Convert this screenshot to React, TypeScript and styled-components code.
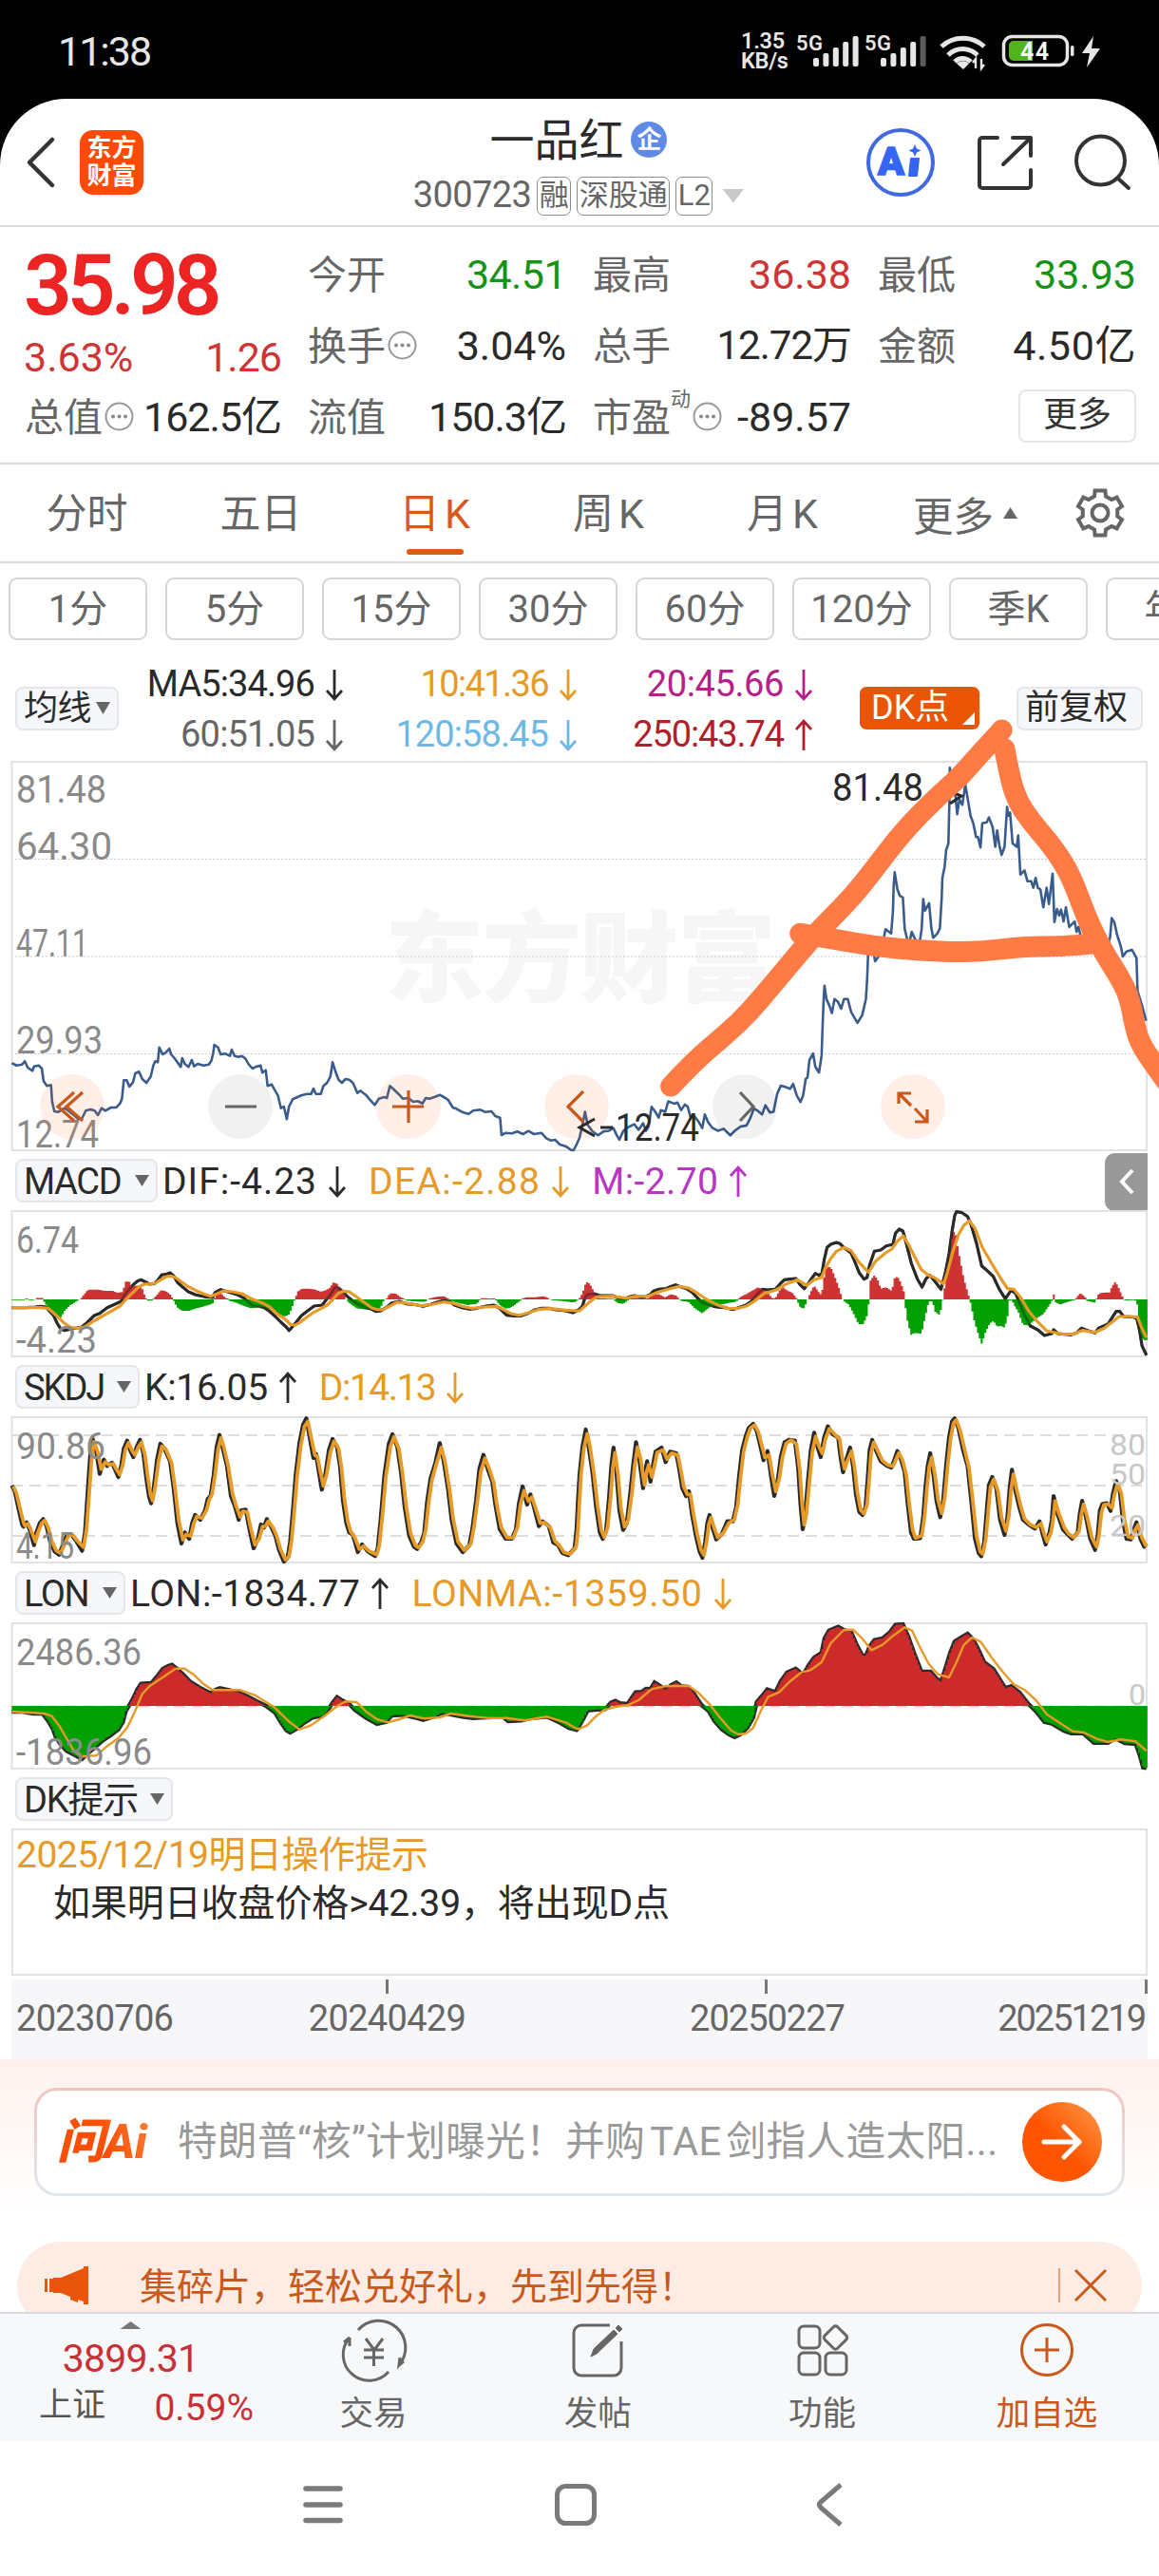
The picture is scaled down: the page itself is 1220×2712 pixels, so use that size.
import React from 'react'
import styled, { createGlobalStyle } from 'styled-components'

const GlobalStyle = createGlobalStyle`
  * {
    box-sizing: border-box;
  }

  body {
    margin: 0;
    background: #000;
    font-family: Roboto, 'Noto Sans CJK SC', sans-serif;
    color: #2b2b2b;
  }

  svg {
    display: block;
    flex: none;
    overflow: visible;
  }
`

const ORANGE = '#d9581a'
const GOLD = '#e79a27'
const RED = '#cd2b2b'
const GREEN = '#00a000'
const INK = '#2a2a2a'

const Screen = styled.div`
  width: 1220px;
  height: 2712px;
  overflow: hidden;
  background: #000;
`

const App = styled.main`
  display: flex;
  flex-direction: column;
  height: 2608px;
  background: #fff;
  border-radius: 70px 70px 0 0;
  overflow: hidden;
`

interface TxtProps {
  $size: number
  $color?: string
  $weight?: number
  $ls?: number
}

const Txt = styled.span<TxtProps>`
  font-size: ${p => p.$size}px;
  line-height: 1.1;
  color: ${p => p.$color || INK};
  font-weight: ${p => p.$weight || 400};
  letter-spacing: ${p => p.$ls || 0}px;
  white-space: nowrap;
`

/* status bar */

const StatusBar = styled.div`
  height: 104px;
  padding: 4px 62px 0 61px;
  display: flex;
  align-items: center;
  color: #e6e6e6;
`

const Clock = styled.div`
  flex: 1;
  font-size: 43px;
  letter-spacing: -2px;
`

const NetSpeed = styled.div`
  width: 57px;
  display: flex;
  flex-direction: column;
  font-size: 23.5px;
  font-weight: 600;
  line-height: 21px;
  letter-spacing: -0.3px;
`

const StatusIcons = styled.svg`
  font-size: 22px;
  font-weight: 600;
`

const Signal = ({ x, dim }: { x: number, dim?: boolean }) => (
  <g fill="#e6e6e6">
    {[9, 14, 20, 26, 32].map((h, i) => (
      <rect key={i} x={x + i * 10.4} y={72 - h} width="6" height={h} rx="2" opacity={dim && i === 4 ? 0.4 : 1} />
    ))}
  </g>
)

/* header */

const Header = styled.header`
  height: 135px;
  padding: 0 30px 0 28px;
  border-bottom: 2px solid #dadada;
  display: grid;
  grid-template-columns: 1fr auto 1fr;
`

const HeaderLeft = styled.div`
  display: flex;
  align-items: center;
  gap: 26px;
`

const HeaderRight = styled.div`
  display: flex;
  align-items: center;
  justify-content: flex-end;
  gap: 44.5px;
`

const Brand = styled.div`
  width: 67px;
  height: 68px;
  padding-top: 5px;
  border-radius: 14px;
  background: #ff4a05;
  color: #fff;
  font-size: 26px;
  font-weight: 700;
  line-height: 29px;
  text-align: center;
`

const Title = styled.div`
  display: flex;
  flex-direction: column;
  align-items: center;
`

const TitleRow = styled.div`
  height: 52px;
  margin-top: 18px;
  display: flex;
  align-items: center;
  gap: 8px;
`

const Badge = styled.span`
  width: 38px;
  height: 38px;
  margin-top: -2px;
  border-radius: 50%;
  background: #5f8be6;
  color: #fff;
  font-size: 26px;
  font-weight: 700;
  line-height: 38px;
  text-align: center;
`

const CodeRow = styled.div`
  height: 64px;
  display: flex;
  align-items: center;
  gap: 6px;
`

const Tag = styled.span`
  height: 41px;
  padding: 0 1.5px;
  border: 1.5px solid #8c8c8c;
  border-radius: 7px;
  color: #666;
  font-size: 31px;
  line-height: 38px;
`

const Triangle = styled.i<{ $w: number, $h: number, $color?: string, $up?: boolean }>`
  flex: none;
  width: ${p => p.$w}px;
  height: ${p => p.$h}px;
  background: ${p => p.$color || '#666'};
  clip-path: ${p => p.$up ? 'polygon(50% 0, 100% 100%, 0 100%)' : 'polygon(0 0, 100% 0, 50% 100%)'};
`

const MenuTriangle = styled(Triangle)`
  margin-left: 4px;
`

/* quote */

const Quote = styled.section`
  height: 250px;
  padding: 13px 0 0 26px;
  border-bottom: 2px solid #dadada;
  display: grid;
  grid-template-columns: 270px 272px 272px 272px;
  grid-template-rows: repeat(3, 75px);
  column-gap: 28px;
`

const PriceCell = styled.div`
  grid-row: span 2;
`

const Price = styled.div`
  height: 96px;
  margin-left: -1px;
  color: #ed2424;
  font-size: 89px;
  font-weight: 600;
  letter-spacing: -5px;
  line-height: 98px;
`

const Change = styled.div`
  height: 57px;
  margin-left: -1px;
  display: flex;
  align-items: center;
  justify-content: space-between;
`

const Cell = styled.div`
  display: flex;
  align-items: center;

  > :last-child {
    margin-left: auto;
  }
`

const Label = styled.span`
  font-size: 41px;
  line-height: 48px;
  color: #666;
  white-space: nowrap;
`

const Sup = styled.sup`
  align-self: flex-start;
  margin-top: 5px;
  font-size: 21px;
  line-height: 26px;
  color: #666;
`

const MoreButton = styled.button`
  width: 124px;
  height: 56px;
  margin-top: -3px;
  border: 2px solid #e6e6e6;
  border-radius: 8px;
  background: #fff;
  color: #333;
  font: 36px/48px Roboto, 'Noto Sans CJK SC', sans-serif;
  padding: 0 0 3px;
`

const DotsIcon = styled.svg`
  margin-left: 2px;
`

const Dots = () => (
  <DotsIcon width="31" height="31" viewBox="0 0 31 31" fill="none">
    <circle cx="15.5" cy="14.5" r="14" stroke="#999" strokeWidth="2" />
    <g fill="#888">
      <circle cx="9" cy="14.5" r="2" />
      <circle cx="15.5" cy="14.5" r="2" />
      <circle cx="22" cy="14.5" r="2" />
    </g>
  </DotsIcon>
)

/* tabs */

const Tabs = styled.nav`
  height: 104px;
  padding: 0 36px 0 0;
  border-bottom: 2px solid #dadada;
  display: flex;
`

const Tab = styled.div<{ $active?: boolean, $ls?: number }>`
  width: 183px;
  padding-top: 2px;
  display: flex;
  flex-direction: column;
  align-items: center;
  justify-content: center;
  font-size: 43px;
  line-height: 60px;
  letter-spacing: ${p => p.$ls || 0}px;
  text-indent: ${p => p.$ls || 0}px;
  color: ${p => p.$active ? ORANGE : '#666'};
  position: relative;

  &::after {
    content: '';
    display: ${p => p.$active ? 'block' : 'none'};
    position: absolute;
    bottom: 7px;
    width: 60px;
    height: 6px;
    border-radius: 3px;
    background: #e2590f;
  }
`

const MoreTab = styled.div`
  flex: 1;
  padding-left: 46px;
  display: flex;
  align-items: center;
  gap: 10px;
  font-size: 42.5px;
  color: #666;
`

const Periods = styled.div`
  height: 97px;
  padding: 15px 0 0 9px;
  display: flex;
  gap: 19px;
  overflow: hidden;
`

const Period = styled.div`
  flex: none;
  width: 146px;
  height: 66px;
  border: 2px solid #d6d6d6;
  border-radius: 9px;
  text-align: center;
  color: #666;
  font-size: 40px;
  line-height: 63px;
`

/* moving averages */

const Averages = styled.div`
  height: 111px;
  padding-left: 16px;
  display: flex;
  align-items: center;
`

const Chip = styled.div<{ $w: number }>`
  flex: none;
  width: ${p => p.$w}px;
  height: 46px;
  padding: 0 7px;
  border: 2px solid #e4e6ea;
  border-radius: 8px;
  background: #f6f7fa;
  color: #2b2b2b;
  font-size: 36px;
  line-height: 42px;
  letter-spacing: -0.6px;
  white-space: nowrap;
  display: flex;
  align-items: center;
  justify-content: space-between;
`

const AverageGrid = styled.div`
  width: 730px;
  height: 107px;
  padding-top: 2px;
  display: grid;
  grid-template-columns: 236px 246px 248px;
  grid-template-rows: 53px 53px;
`

const Reading = styled.div<{ $color: string, $gap?: number }>`
  display: flex;
  align-items: center;
  justify-content: flex-end;
  gap: ${p => p.$gap || 12}px;
  color: ${p => p.$color};
`

const DkButton = styled.div`
  width: 126px;
  height: 45px;
  margin: 0 39px 0 50px;
  padding: 0 5px 5px 12px;
  border-radius: 7px;
  background: #e95504;
  color: #fff;
  font-size: 36px;
  line-height: 36px;
  white-space: nowrap;
  display: flex;
  align-items: flex-end;
  justify-content: space-between;
`

const Corner = styled.i`
  width: 13px;
  height: 13px;
  background: #fff;
  clip-path: polygon(100% 0, 100% 100%, 0 100%);
`

const Arrow = ({ up }: { up?: boolean }) => (
  <svg width="18" height="34" viewBox="0 0 18 34" fill="none" stroke="currentColor" strokeWidth="2.8">
    <path d={up ? 'M9 33V3M1 11l8-9 8 9' : 'M9 1v30M1 23l8 9 8-9'} />
  </svg>
)

/* charts: data is kept per half (left, right) in raster units, y from the top of the block */

type Pt = [number, number]

const KX = 2.5705

const read = (src: string): Pt[] =>
  src.trim().split(/\s+/).map(s => s.split(',').map(Number) as Pt)

const place = (src: string, x0: number, y0: number, ky: number): Pt[] =>
  read(src).map(([x, y]) => [x0 + x / KX, y0 + y / ky])

const series = (left: string, right: string, y0: number): Pt[] => [
  ...place(left, 0, y0, 3),
  ...place(right, 610, y0, 3)
]

const line = (pts: Pt[]) => 'M' + pts.map(([x, y]) => `${x.toFixed(1)} ${y.toFixed(1)}`).join('L')

const smooth = (pts: Pt[]) => {
  let d = `M${pts[0][0]} ${pts[0][1]}`
  for (let i = 1; i < pts.length - 1; i++) {
    const [x, y] = pts[i]
    const [nx, ny] = pts[i + 1]
    d += `Q${x} ${y} ${(x + nx) / 2} ${(y + ny) / 2}`
  }
  const end = pts[pts.length - 1]
  return d + `L${end[0]} ${end[1]}`
}

const valueAt = (pts: Pt[], x: number) => {
  let i = 1
  while (i < pts.length - 1 && pts[i][0] < x) i++
  const [x1, y1] = pts[i - 1]
  const [x2, y2] = pts[i]
  return x2 === x1 ? y2 : y1 + (y2 - y1) * Math.min(1, Math.max(0, (x - x1) / (x2 - x1)))
}

const bars = (pts: Pt[], zero: number, above: boolean, step: number) => {
  let d = ''
  for (let x = pts[0][0]; x < 1207; x += step) {
    const y = valueAt(pts, x + step / 2)
    if (above ? y < zero - 0.3 : y > zero + 0.3) {
      d += `M${x.toFixed(1)} ${zero}V${y.toFixed(1)}h${step + 0.1}V${zero}z`
    }
  }
  return d
}

const priceLine: Pt[] = [
  ...place(`32,958 45,965 60,962 67,952 75,972 88,982 92,968 105,965 113,975 118,1015 127,1030 138,1027 141,1080 147,1110
    158,1112 175,1100 187,1110 200,1122 212,1135 222,1132 232,1108 245,1104 256,1108 265,1122 275,1100 285,1108 300,1098
    315,1098 325,1085 330,1070 335,1012 343,1012 350,1032 360,1018 366,990 376,985 385,1008 396,1020 408,1000 415,965
    420,952 427,955 431,908 440,930 448,925 458,912 463,930 472,942 480,955 489,970 493,942 500,960 510,970 519,948
    525,968 535,960 550,965 565,962 572,950 577,925 580,900 590,908 597,930 610,928 622,935 627,915 635,935 645,938
    655,935 665,945 672,960 683,975 695,968 705,965 710,988 719,980 724,1030 735,1025 742,1040 752,1060 760,1100
    768,1095 776,1135 782,1095 792,1072 805,1065 815,1060 830,1055 842,1055 848,1038 855,1055 868,1055 875,1030
    885,1020 894,1000 900,955 908,985 916,1010 925,1020 935,1008 945,1010 955,1020 967,1052 975,1045 990,1058
    1000,1072 1014,1090 1025,1070 1040,1065 1047,1068 1055,1030 1065,1040 1078,1055 1090,1070 1105,1068 1118,1080
    1130,1078 1143,1085 1152,1068 1162,1070 1175,1065 1190,1058 1205,1068 1213,1075 1225,1098 1235,1102 1250,1112
    1268,1118 1280,1108 1300,1105 1312,1112 1330,1110 1340,1125 1353,1130 1357,1185 1368,1178 1385,1180 1400,1174
    1415,1182 1430,1172 1445,1182 1465,1178 1478,1195 1490,1202 1502,1200 1515,1215 1530,1220 1545,1232 1552,1233
    1560,1215`, 0, 800, 3),
  ...place(`0,1330 8,1290 15,1250 22,1290 35,1310 50,1322 65,1310 80,1308 92,1300 100,1320 108,1335 118,1310 130,1298
    148,1288 160,1305 172,1285 180,1308 187,1295 195,1235 205,1250 214,1268 220,1245 232,1250 240,1218 256,1225
    265,1222 275,1245 285,1228 293,1235 300,1265 312,1265 322,1280 332,1300 339,1258 348,1282 360,1300 375,1308
    390,1302 408,1322 420,1308 436,1295 452,1292 462,1270 472,1240 480,1245 494,1258 503,1230 515,1252 525,1250
    535,1195 545,1170 560,1175 570,1180 578,1165 588,1200 598,1220 605,1200 612,1150 617,1145 622,1092 632,1072
    638,1112 648,1130 655,1080 658,980 661,900 663,865 668,905 676,925 683,948 690,905 700,915 708,935 716,905
    726,905 735,945 752,978 765,955 775,905 778,850 781,770 784,718 792,740 800,790 812,770 820,740 828,692 843,705
    848,640 850,560 853,518 860,570 867,590 875,595 880,690 886,720 892,735 899,700 908,722 920,735 926,690 930,600
    935,635 946,612 952,690 957,718 968,705 975,690 980,600 982,535 988,500 992,450 998,430 1001,300 1002,198
    1008,240 1016,270 1022,340 1028,295 1036,312 1044,250 1050,290 1058,345 1066,370 1073,410 1078,410 1085,442
    1090,368 1102,365 1108,350 1118,380 1125,440 1130,390 1136,435 1142,465 1150,440 1157,318 1160,345 1165,335
    1172,430 1183,440 1187,405 1193,525 1204,512 1212,545 1222,545 1228,565 1234,535 1240,565 1247,570 1255,625
    1264,565 1270,615 1280,522 1285,670 1292,630 1298,650 1303,632 1310,668 1316,625 1325,685 1340,668 1345,700
    1350,685 1358,720 1370,735 1400,725 1415,730 1430,740 1436,715 1440,658 1447,670 1455,710 1465,745 1470,775
    1480,760 1495,755 1507,780 1510,880 1522,925 1533,972`, 610, 740, 2.9037)
]

const dif = series(
  `32,350 70,350 95,348 110,346 125,348 135,362 145,375 155,400 165,418 175,422 195,416 205,415 220,412 235,398 255,375
  270,368 290,350 310,340 328,330 335,315 345,298 360,278 372,266 382,262 395,270 405,276 418,274 428,262 438,246
  448,245 460,240 470,250 480,270 495,286 510,300 530,310 555,316 575,318 582,302 597,293 610,298 640,308 660,320
  685,345 700,345 715,350 730,362 745,378 760,396 775,412 782,422 790,412 800,398 815,376 830,362 850,345 872,342
  882,326 892,312 902,295 908,285 918,290 928,300 940,315 950,325 970,340 990,350 1005,355 1018,362 1030,360
  1045,350 1060,335 1080,330 1100,338 1120,340 1145,346 1165,340 1185,332 1200,328 1215,330 1230,342 1250,350
  1270,355 1290,352 1315,345 1335,342 1350,350 1360,362 1372,374 1390,376 1410,376 1425,370 1445,358 1465,352
  1485,352 1500,356 1530,360 1550,366`,
  `0,355 8,345 15,318 22,308 40,306 55,312 90,312 105,320 120,324 135,316 150,312 170,318 190,310 200,298 215,292
  235,290 245,284 260,278 275,285 290,290 305,302 318,318 330,332 345,340 370,348 395,350 415,356 430,350 450,342
  465,330 480,308 495,292 510,294 530,292 545,272 555,262 570,260 585,258 597,278 608,290 620,272 630,255 638,242
  648,248 656,242 662,200 670,160 680,150 695,144 705,148 715,160 735,178 745,205 757,240 770,260 778,255 785,215
  798,172 815,168 830,155 848,150 855,115 865,102 875,108 885,150 898,210 915,262 927,285 938,258 948,248 960,265
  978,292 990,240 1000,180 1008,110 1015,60 1020,47 1035,50 1050,62 1060,90 1075,150 1088,218 1102,232 1120,252
  1135,290 1152,322 1168,295 1180,305 1192,340 1205,375 1220,408 1240,420 1258,438 1278,432 1283,420 1295,432
  1330,436 1345,430 1358,415 1375,422 1395,430 1405,415 1430,402 1442,380 1452,362 1462,362 1472,378 1500,380
  1508,385 1515,420 1522,470 1534,500`,
  1260
)

const dea = series(
  `32,350 110,350 130,352 150,372 175,400 190,412 210,415 230,410 250,395 275,378 300,362 325,345 340,325 360,302
  375,285 390,276 405,275 420,273 435,262 450,252 462,250 475,255 490,268 510,284 530,296 550,306 570,314 590,305
  605,297 630,300 655,306 680,322 710,335 730,348 750,370 770,385 785,402 797,406 810,398 830,380 850,364 870,352
  885,342 900,325 915,305 930,298 945,300 960,312 975,325 990,337 1005,350 1020,356 1035,357 1055,345 1075,333
  1100,336 1140,344 1170,340 1200,332 1225,336 1250,346 1275,352 1310,348 1345,346 1365,358 1385,370 1405,374
  1430,366 1460,355 1490,353 1530,358 1560,360`,
  `0,360 15,345 35,325 50,315 90,314 125,320 150,314 185,314 215,300 245,290 270,283 295,288 320,305 345,325 375,342
  400,352 425,353 450,346 475,328 500,305 530,295 560,275 590,262 615,280 635,262 655,255 665,225 680,195 695,172
  715,160 735,170 755,205 782,238 800,205 825,180 845,165 860,140 876,124 890,150 905,185 925,230 945,248 960,255
  985,275 995,240 1010,175 1025,120 1040,90 1055,76 1070,100 1090,160 1115,210 1140,258 1158,290 1175,292 1195,320
  1215,360 1240,395 1265,424 1285,428 1310,434 1335,434 1360,422 1395,428 1420,415 1445,392 1460,378 1490,378
  1510,380 1520,410 1534,445`,
  1260
)

const macd = series(
  `32,326 68,326 69,322 75,322 76,326 92,326 100,319 116,320 118,328 130,350 145,375 163,384 175,360 190,342 210,328
  218,322 228,308 238,293 262,293 285,297 305,297 318,304 332,300 340,268 350,268 356,285 372,280 386,292 393,318
  400,328 412,328 415,322 425,310 435,295 445,297 458,305 468,322 470,328 480,350 492,360 512,360 525,354 545,348
  560,343 575,338 580,326 582,310 595,300 608,318 618,322 620,328 640,335 660,345 680,352 695,350 715,348 735,358
  755,372 770,378 782,372 790,350 797,326 800,318 805,300 818,290 835,290 850,292 868,300 880,296 892,288 902,270
  912,275 920,290 930,305 936,322 938,328 950,340 965,352 985,355 1005,356 1020,360 1030,350 1038,328 1047,320
  1055,305 1070,305 1085,318 1096,322 1098,328 1120,330 1150,332 1154,328 1160,322 1180,316 1200,314 1215,322
  1218,328 1240,335 1265,342 1290,338 1297,328 1300,320 1340,321 1342,326 1355,345 1370,354 1385,348 1400,335
  1410,326 1412,322 1425,317 1450,317 1470,314 1485,320 1490,326 1520,329 1550,333 1560,330`,
  `0,320 8,305 18,268 28,275 38,298 45,316 55,321 90,322 95,328 105,336 118,338 130,328 135,322 150,319 185,321
  195,310 215,308 232,318 245,308 262,312 270,322 272,328 295,332 312,352 332,368 350,350 375,342 400,336 420,332
  430,326 432,318 450,308 470,295 482,286 495,292 510,305 522,320 530,320 540,298 550,285 560,295 575,302 587,320
  590,330 598,350 608,352 615,330 620,315 628,295 635,280 645,298 655,312 660,265 668,222 680,222 690,250 700,280
  710,318 714,328 728,340 740,365 755,402 768,402 780,370 783,330 784,320 787,265 798,248 808,265 815,290 830,286
  845,298 852,258 860,252 868,268 878,300 881,340 888,395 897,436 905,430 925,432 935,380 945,330 955,330 962,362
  973,372 980,350 984,315 992,260 1000,210 1008,130 1015,102 1022,150 1030,200 1040,260 1050,300 1055,320 1058,335
  1068,390 1078,430 1088,464 1098,430 1110,400 1120,392 1130,410 1140,408 1150,414 1158,380 1162,328 1170,326
  1178,345 1188,365 1200,404 1215,406 1235,385 1255,370 1270,345 1279,328 1280,308 1286,308 1287,332 1300,340
  1320,332 1340,326 1345,318 1355,304 1368,316 1372,328 1395,334 1398,328 1400,312 1410,303 1435,302 1440,285
  1450,268 1460,290 1470,318 1475,327 1500,326 1508,330 1512,370 1520,440 1527,454 1534,452`,
  1260
)

const kLine = series(
  `32,912 40,930 50,985 60,1035 64,1042 72,1028 80,1050 92,1100 98,1062 108,1030 117,1018 126,1040 136,1090 148,1120
  160,1130 170,1100 182,1065 192,1065 205,1085 222,1118 230,1060 238,920 244,820 250,762 260,800 270,875 281,830
  290,850 303,840 310,858 320,885 328,850 335,795 344,770 352,800 361,822 370,790 379,768 388,810 396,890 403,945
  409,968 416,920 425,830 434,780 445,795 460,835 470,920 480,1030 491,1095 500,1060 512,1080 520,1030 528,1005
  542,1020 555,990 562,955 570,945 578,880 586,790 594,752 602,790 614,850 625,945 635,975 646,1020 653,990 665,988
  675,1050 686,1110 698,1080 706,1035 714,1045 722,1018 735,1045 745,1070 755,1115 768,1152 778,1140 785,1090
  792,1000 800,880 810,780 820,720 829,700 838,760 848,825 855,812 863,870 871,925 880,880 890,800 900,765 912,790
  920,850 928,960 937,1030 945,1060 955,1068 968,1122 980,1098 995,1120 1015,1135 1022,1110 1030,1020 1040,880
  1052,780 1062,750 1075,790 1085,870 1095,980 1107,1070 1120,1105 1129,1112 1140,1090 1148,1060 1156,960 1165,890
  1178,840 1190,778 1200,830 1212,920 1222,1020 1235,1095 1252,1122 1270,1100 1278,1050 1288,960 1297,860 1308,815
  1320,860 1332,900 1340,970 1352,1050 1368,1080 1385,1080 1396,1050 1404,970 1414,915 1426,972 1435,940 1445,980
  1458,1040 1468,1025 1485,1040 1497,1092 1510,1100 1522,1125 1538,1132 1555,1110 1560,1050 1564,960`,
  `0,880 8,790 17,735 25,790 35,870 45,980 55,1060 63,1080 72,1055 80,950 86,850 92,792 100,870 108,990 118,1052
  128,1030 138,930 145,850 153,775 162,830 168,885 172,920 177,870 183,835 192,900 200,840 206,805 222,792 233,838
  245,805 262,810 270,860 278,920 288,945 296,930 304,1000 315,1070 325,1120 333,1140 340,1090 346,1030 352,1005
  360,1045 370,1082 385,1065 400,1025 415,1025 424,980 432,880 440,800 450,755 458,730 470,717 480,740 490,790
  498,832 509,803 518,880 527,945 537,890 545,820 555,775 568,767 583,770 592,860 598,970 604,1050 610,1010 618,900
  626,800 635,745 644,790 653,822 662,760 672,725 685,750 700,760 706,820 713,870 722,830 732,792 740,850 748,940
  757,995 766,1005 774,980 780,890 785,800 792,768 802,800 815,835 830,848 844,855 852,830 860,803 870,830 880,870
  888,970 897,1060 905,1080 922,1078 930,1010 936,920 942,850 949,810 958,880 966,960 976,1012 984,960 992,850
  1000,760 1008,710 1015,700 1025,730 1038,800 1050,850 1060,960 1070,1080 1080,1125 1087,1135 1095,1090 1102,990
  1108,910 1117,885 1128,920 1138,1020 1150,1068 1158,1010 1164,920 1170,862 1178,920 1190,980 1200,1020 1215,1035
  1232,1048 1245,1025 1252,1060 1261,1098 1272,1060 1278,1020 1283,945 1293,1000 1308,1050 1320,1065 1333,1080
  1348,1060 1354,1000 1360,960 1370,1010 1382,1080 1395,1115 1402,1070 1408,990 1415,970 1427,968 1437,992 1443,940
  1452,898 1462,930 1470,1020 1480,1080 1492,1082 1500,1050 1507,1028 1518,1080 1528,1105 1534,1095`,
  1260
)

const dLine: Pt[] = kLine.map(([x, y], i) => {
  const prev = kLine[Math.max(0, i - 1)][1]
  const next = kLine[Math.min(kLine.length - 1, i + 1)][1]
  return [Math.min(1207, x + 1.6), y * 0.76 + prev * 0.12 + next * 0.12]
})

const lon = series(
  `32,456 60,456 90,462 115,462 130,485 143,510 152,540 165,560 180,580 200,592 222,605 235,590 250,575 275,550 300,530
  320,512 332,490 340,455 350,435 362,410 372,385 382,368 410,366 425,345 440,322 455,312 465,308 478,320 495,338
  515,362 540,380 570,398 582,388 595,382 620,388 645,395 670,408 695,424 720,438 745,460 760,490 775,515 785,522
  800,512 825,490 845,475 875,468 888,450 900,428 912,410 925,420 945,432 960,450 990,475 1020,495 1045,488 1060,468
  1090,466 1120,474 1145,482 1175,472 1195,460 1215,464 1250,472 1280,476 1320,474 1360,472 1375,486 1410,484
  1440,476 1480,472 1510,488 1540,508 1560,514`,
  `0,500 12,475 22,452 40,450 70,448 85,428 97,422 110,430 130,432 140,415 152,395 168,394 180,384 192,385 203,364
  215,372 233,388 248,372 262,364 275,376 295,378 310,400 330,435 350,455 365,485 385,512 405,528 420,536 435,528
  455,505 470,475 480,425 495,405 508,386 530,395 545,360 562,332 585,320 605,340 620,310 635,285 655,270 663,225
  675,200 700,188 715,198 735,205 750,245 765,278 775,280 785,250 798,230 820,225 840,205 855,182 875,180 890,220
  905,270 925,330 950,330 965,350 978,362 990,320 1003,270 1015,235 1035,220 1050,210 1065,228 1080,262 1095,300
  1120,322 1135,350 1152,382 1168,376 1190,395 1215,432 1235,455 1258,488 1278,494 1310,516 1330,524 1362,524
  1392,554 1430,554 1450,540 1475,555 1505,558 1515,590 1525,632 1534,634`,
  1650
)

const lonma = series(
  `32,456 90,460 120,462 140,470 160,500 180,540 200,580 220,598 240,596 260,595 290,565 320,540 345,505 365,455
  385,400 405,375 440,348 475,320 500,320 525,340 550,368 575,388 610,388 650,388 690,404 740,440 780,485 810,512
  840,500 880,468 910,440 935,424 965,426 990,455 1020,480 1050,490 1080,480 1110,468 1150,478 1190,474 1220,462
  1270,470 1320,476 1370,476 1420,484 1480,472 1530,490 1560,510`,
  `0,510 20,500 45,470 65,452 100,440 130,436 160,420 195,385 230,376 295,374 320,395 350,430 380,475 410,515
  430,528 450,525 470,508 490,455 510,410 540,395 570,360 600,332 625,325 655,300 680,240 715,198 740,197 765,225
  790,262 820,245 850,215 880,190 900,200 920,250 945,305 970,338 1000,348 1020,300 1040,245 1062,222 1085,235
  1115,285 1145,330 1175,370 1205,388 1235,420 1265,465 1300,492 1335,518 1365,522 1400,542 1430,552 1465,544
  1505,550 1534,580`,
  1650
)

const strokes = [
  '247,1172 310,1095 400,1010 460,945 520,865 590,770 640,705 680,660 740,590 800,505 860,415 920,340 990,265 1030,225 1080,160 1143,83',
  '1150,140 1165,230 1185,300 1220,360 1270,425 1310,490 1335,545 1360,620 1385,690 1420,765 1470,855 1490,910 1503,990 1520,1050 1590,1160',
  '597,705 680,720 800,745 930,758 1070,763 1200,745 1300,745 1400,735'
].map(s => place(s, 610, 740, 2.9037))

const ChartArea = styled.div`
  position: relative;
  margin-left: 12px;
`

const Overlay = styled.svg`
  position: absolute;
  left: 0;
  top: 0;
`

interface AxisLabelProps {
  x?: number
  y: number
  w: number
  size?: number
  fill?: string
  children: string
}

const AxisLabel = ({ x = 17, y, w, size = 38, fill = '#8a8a8a', children }: AxisLabelProps) => (
  <text x={x} y={y} fontSize={size} fill={fill} textLength={w} lengthAdjust="spacingAndGlyphs">{children}</text>
)

const Frame = ({ top, height }: { top: number, height: number }) => (
  <rect x="12.5" y={top + 1} width="1194.5" height={height - 2} fill="none" stroke="#e2e2e2" strokeWidth="2" />
)

const Controls = styled.div`
  position: absolute;
  left: 30px;
  top: 330px;
  display: flex;
  gap: 109px;
`

const Control = styled.div<{ $muted?: boolean }>`
  width: 68px;
  height: 68px;
  border-radius: 50%;
  background: ${p => p.$muted ? 'rgba(0, 0, 0, 0.055)' : 'rgba(255, 110, 30, 0.11)'};
  color: ${p => p.$muted ? '#666' : '#c9581a'};
`

const controls = [
  { d: 'M36 19L19 34l17 15M45 19L28 34l17 15' },
  { d: 'M18 34h33', muted: true },
  { d: 'M17 34h33M34 17v34' },
  { d: 'M41 18L25 34l16 16' },
  { d: 'M29 19l14 15-14 15', muted: true },
  { d: 'M19 31V20h13M20 21l12 12M49 37v13H36M48 49L36 36' }
]

const IndicatorRow = styled.div`
  height: 62px;
  padding-left: 16px;
  display: flex;
  align-items: center;
`

const Readings = styled.div`
  margin: 3px 0 0 5px;
  display: flex;
  gap: 24px;
`

const SideTab = styled.div`
  width: 45px;
  height: 61px;
  margin: 2px 12px 0 auto;
  border-radius: 10px 0 0 10px;
  background: #999;
  display: flex;
  align-items: center;
  justify-content: center;
`

interface IndicatorProps {
  name: string
  width: number
  ls?: number
  readings?: { text: string, color: string, ls?: number, up?: boolean }[]
  children?: React.ReactNode
}

const ChipName = styled(Txt)`
  padding-top: 3px;
`

const Indicator = ({ name, width, ls = -1.4, readings = [], children }: IndicatorProps) => (
  <IndicatorRow>
    <Chip $w={width}>
      <ChipName $size={38} $ls={ls}>{name}</ChipName>
      <Triangle $w={15} $h={12} />
    </Chip>
    <Readings>
      {readings.map(r => (
        <Reading key={r.text} $color={r.color}>
          <Txt $size={39} $color={r.color} $ls={r.ls}>{r.text}</Txt>
          <Arrow up={r.up} />
        </Reading>
      ))}
    </Readings>
    {children}
  </IndicatorRow>
)

const HintBox = styled.div`
  width: 1196px;
  height: 155px;
  margin-left: 12px;
  padding: 1px 3px;
  border: 2px solid #e2e2e2;
  font-size: 39px;
  line-height: 51px;
  color: ${INK};
`

const HintDate = styled.div`
  letter-spacing: -0.5px;
  color: ${GOLD};
`

const HintText = styled.div`
  padding-left: 39px;
  letter-spacing: -0.1px;
`

const DateAxis = styled.div`
  width: 1196px;
  height: 84px;
  margin: 4px 0 0 12px;
  background: #f7f7fa;
  display: grid;
  grid-template-columns: 194.5px 400px 400px 201.5px;
  position: relative;
`

const AxisDate = styled.div<{ $align?: string, $ls?: number }>`
  padding: 14px 3px 0 5px;
  text-align: ${p => p.$align || 'center'};
  font-size: 38px;
  line-height: 54px;
  letter-spacing: ${p => p.$ls || -0.7}px;
  color: #666;
`

const Tick = styled.i<{ $left: number }>`
  position: absolute;
  left: ${p => p.$left}px;
  top: 0;
  width: 3px;
  height: 15px;
  background: #777;
`

/* assistant + notice */

const Assistant = styled.div`
  height: 192px;
  padding: 30px 36px 0;
  background: linear-gradient(#fff1ed, #fff 85%);
`

const AskBox = styled.div`
  height: 114px;
  padding: 0 21px;
  border: 3px solid transparent;
  border-radius: 24px;
  background:
    linear-gradient(#fff, #fff) padding-box,
    linear-gradient(#f0c6be, #e0e7f0) border-box;
  display: flex;
  align-items: center;
`

const AskLogo = styled.span`
  width: 127px;
  font-size: 50px;
  line-height: 60px;
  font-weight: 800;
  font-style: italic;
  letter-spacing: -0.5px;
  white-space: nowrap;
  color: transparent;
  background: linear-gradient(70deg, #fa4f05 40%, #ff9452);
  background-clip: text;
`

const Question = styled.span`
  flex: 1;
  font-size: 41.6px;
  line-height: 60px;
  letter-spacing: 0.4px;
  color: #999;
  white-space: nowrap;
`

const Latin = styled.span`
  margin: 0 5px;
`

const Go = styled.span`
  width: 84px;
  height: 84px;
  border-radius: 50%;
  background: linear-gradient(45deg, #ff5400 45%, #ff9a48);
  display: flex;
  align-items: center;
  justify-content: center;
`

const NoticeClip = styled.div`
  height: 74px;
  padding: 0 18px;
  overflow: hidden;
`

const Notice = styled.div`
  height: 92px;
  padding: 0 38px 0 29px;
  border-radius: 46px;
  background: #fdece4;
  color: #c9581a;
  font-size: 39px;
  display: flex;
  align-items: center;
`

const NoticeText = styled.span`
  flex: 1;
  margin: -5px 0 0 53px;
  white-space: nowrap;
`

/* bottom bars */

const BottomBar = styled.div`
  height: 136px;
  border-top: 2px solid #d8dadd;
  background: #f7f8fa;
  display: flex;
`

const IndexBlock = styled.div`
  width: 275px;
  padding-top: 8px;
  display: flex;
  flex-direction: column;
  align-items: center;
`

const IndexValue = styled(Txt)`
  margin-top: 9px;
`

const IndexRow = styled.div`
  width: 226px;
  margin: 8px 0 0 41px;
  align-self: flex-start;
  display: flex;
  justify-content: space-between;
`

const Action = styled.div<{ $accent?: boolean }>`
  width: 236.3px;
  padding-top: 8px;
  display: flex;
  flex-direction: column;
  align-items: center;
  gap: 13px;
  color: ${p => p.$accent ? '#c9581a' : '#666'};
  font-size: 35.5px;
  line-height: 48px;
`

const NavBar = styled.div`
  height: 142px;
  padding: 0 334px 9px 319px;
  display: grid;
  grid-template-columns: 265px 275px 28px;
  align-items: center;
`

const gearPath = () => {
  const pts: string[] = []
  const at = (deg: number, r: number) => {
    const a = (deg - 90) * Math.PI / 180
    pts.push(`${(26 + r * Math.cos(a)).toFixed(1)} ${(26 + r * Math.sin(a)).toFixed(1)}`)
  }
  for (let i = 0; i < 6; i++) {
    const c = i * 60
    at(c - 19, 18.5)
    at(c - 13, 24)
    at(c + 13, 24)
    at(c + 19, 18.5)
  }
  return 'M' + pts.join('L') + 'z'
}

export default () => (
  <Screen>
    <GlobalStyle />
    <StatusBar>
      <Clock>11:38</Clock>
      <NetSpeed><span>1.35</span><span>KB/s</span></NetSpeed>
      <StatusIcons width="321" height="40" viewBox="837 36 321 40">
        <text x="838" y="55" fill="#e6e6e6" textLength="28">5G</text>
        <Signal x={856} />
        <text x="910" y="55" fill="#e6e6e6" textLength="28">5G</text>
        <Signal x={927} dim />
        <g fill="none" stroke="#e6e6e6" strokeWidth="5">
          <path d="M991 51a33 33 0 0 1 45 0M998 60a22 22 0 0 1 31 0" />
          <path d="M1005 67a12 12 0 0 1 17 0" />
        </g>
        <path d="M1007 69l7 6 6-6a9 9 0 0 0-13 0z" fill="#e6e6e6" />
        <path d="M1027 74V64l-3 4M1033 64v10l3-4" stroke="#e6e6e6" strokeWidth="2.4" fill="none" />
        <rect x="1056.5" y="40.5" width="67" height="30" rx="9" fill="none" stroke="#e6e6e6" strokeWidth="3.5" />
        <path d="M1067 45h20v21h-20a5 5 0 0 1-5-5v-11a5 5 0 0 1 5-5z" fill="#52b41c" />
        <text x="1074" y="65" fill="#fff" fontSize="25" textLength="30">44</text>
        <rect x="1127" y="50" width="3.5" height="11" rx="1.5" fill="#e6e6e6" />
        <path d="M1151 40l-12 18h8l-3 15 14-20h-9z" fill="#e6e6e6" />
      </StatusIcons>
    </StatusBar>
    <App>
      <Header>
        <HeaderLeft>
          <svg width="30" height="54" viewBox="0 0 30 54" fill="none" stroke="#333" strokeWidth="4.5" strokeLinecap="round" strokeLinejoin="round">
            <path d="M27 3L3 27l24 24" />
          </svg>
          <Brand>东方<br />财富</Brand>
        </HeaderLeft>
        <Title>
          <TitleRow>
            <Txt $size={47}>一品红</Txt>
            <Badge>企</Badge>
          </TitleRow>
          <CodeRow>
            <Txt $size={38} $color="#666" $ls={-0.6}>300723</Txt>
            <Tag>融</Tag>
            <Tag>深股通</Tag>
            <Tag>L2</Tag>
            <MenuTriangle $w={23} $h={15} $color="#c9c9c9" />
          </CodeRow>
        </Title>
        <HeaderRight>
          <svg width="72" height="72" viewBox="0 0 72 72">
            <circle cx="36" cy="36" r="34" fill="none" stroke="#4068e0" strokeWidth="4" />
            <g fill="#3565f5" fontWeight="900" fontSize="41">
              <text x="12" y="49" textLength="29" stroke="#3565f5" strokeWidth="1.5">A</text>
            </g>
            <path d="M47 32h8l-2 18h-8z" fill="#3565f5" stroke="#3565f5" strokeWidth="2" strokeLinejoin="round" />
            <path d="M51 17l2 4.500 4.500 2-4.500 2-2 4.500-2-4.500-4.500-2 4.500-2z" fill="#3565f5" />
          </svg>
          <svg width="58" height="58" viewBox="0 0 58 58" fill="none" stroke="#333" strokeWidth="4" strokeLinecap="round" strokeLinejoin="round">
            <path d="M21 3H5a3 3 0 0 0-3 3v47a3 3 0 0 0 3 3h48a3 3 0 0 0 3-3V37M37 3h19v19M56 3L27 31" />
          </svg>
          <svg width="59" height="60" viewBox="0 0 59 60" fill="none" stroke="#333" strokeWidth="4" strokeLinecap="round">
            <circle cx="27.5" cy="28" r="25.5" />
            <path d="M46 47l11 10" />
          </svg>
        </HeaderRight>
      </Header>

      <Quote>
        <PriceCell>
          <Price>35.98</Price>
          <Change>
            <Txt $size={43} $color="#cf3434">3.63%</Txt>
            <Txt $size={43} $color="#cf3434" $ls={-1}>1.26</Txt>
          </Change>
        </PriceCell>
        <Cell><Label>今开</Label><Txt $size={43} $color="#159315" $ls={-0.6}>34.51</Txt></Cell>
        <Cell><Label>最高</Label><Txt $size={43} $color="#cf3434">36.38</Txt></Cell>
        <Cell><Label>最低</Label><Txt $size={43} $color="#159315">33.93</Txt></Cell>
        <Cell><Label>换手</Label><Dots /><Txt $size={43}>3.04%</Txt></Cell>
        <Cell><Label>总手</Label><Txt $size={42} $ls={-1}>12.72万</Txt></Cell>
        <Cell><Label>金额</Label><Txt $size={43} $ls={0.6}>4.50亿</Txt></Cell>
        <Cell><Label>总值</Label><Dots /><Txt $size={43} $ls={-1}>162.5亿</Txt></Cell>
        <Cell><Label>流值</Label><Txt $size={43} $ls={-1}>150.3亿</Txt></Cell>
        <Cell><Label>市盈</Label><Sup>动</Sup><Dots /><Txt $size={43}>-89.57</Txt></Cell>
        <Cell><MoreButton>更多</MoreButton></Cell>
      </Quote>

      <Tabs>
        <Tab>分时</Tab>
        <Tab>五日</Tab>
        <Tab $active $ls={5}>日K</Tab>
        <Tab $ls={5}>周K</Tab>
        <Tab $ls={5}>月K</Tab>
        <MoreTab>更多<Triangle $w={15} $h={12} $up /></MoreTab>
        <svg width="52" height="100" viewBox="0 -25 52 100" fill="none" stroke="#666" strokeWidth="4">
          <path d={gearPath()} />
          <circle cx="26" cy="26" r="8.500" />
        </svg>
      </Tabs>

      <Periods>
        {['1分', '5分', '15分', '30分', '60分', '120分', '季K', '年K'].map(p => <Period key={p}>{p}</Period>)}
      </Periods>

      <Averages>
        <Chip $w={109}>均线<Triangle $w={15} $h={13} /></Chip>
        <AverageGrid>
          <Reading $color={INK}><Txt $size={38} $ls={-0.9}>MA5:34.96</Txt><Arrow /></Reading>
          <Reading $color={GOLD}><Txt $size={38} $color={GOLD} $ls={-1.6}>10:41.36</Txt><Arrow /></Reading>
          <Reading $color="#b5208a"><Txt $size={38} $color="#b5208a" $ls={-0.4}>20:45.66</Txt><Arrow /></Reading>
          <Reading $color="#666"><Txt $size={38} $color="#666" $ls={-0.8}>60:51.05</Txt><Arrow /></Reading>
          <Reading $color="#6db8e6"><Txt $size={38} $color="#6db8e6" $ls={-0.9}>120:58.45</Txt><Arrow /></Reading>
          <Reading $color="#b0202a"><Txt $size={38} $color="#b0202a" $ls={-1.1}>250:43.74</Txt><Arrow up /></Reading>
        </AverageGrid>
        <DkButton>DK点<Corner /></DkButton>
        <Chip $w={133}><Txt $size={36}>前复权</Txt></Chip>
      </Averages>

      <ChartArea>
        <svg width="1196" height="411" viewBox="12 801 1196 411">
          <text x="405" y="1047" fontSize="104" fontWeight="900" fill="#f6f6f6" textLength="412">东方财富</text>
          <path d="M12 904.5H1207M12 1007H1207M12 1109.5H1207" stroke="#ccc" strokeDasharray="2 2" />
          <Frame top={801} height={411} />
          <path d={line(priceLine)} fill="none" stroke="#3a5c8c" strokeWidth="2.6" strokeLinejoin="round" />
          <AxisLabel y={845} w={95} size={41}>81.48</AxisLabel>
          <AxisLabel y={905} w={101} size={41}>64.30</AxisLabel>
          <AxisLabel y={1007} w={76} size={41}>47.11</AxisLabel>
          <AxisLabel y={1109} w={91} size={41}>29.93</AxisLabel>
          <AxisLabel y={1208} w={87} size={41}>12.74</AxisLabel>
          <AxisLabel x={876} y={843} w={96} size={40} fill={INK}>81.48</AxisLabel>
          <path d="M974 838h14M1000 833l12 5-12 8" fill="none" stroke={INK} strokeWidth="3" />
        </svg>
        <Controls>
          {controls.map(c => (
            <Control key={c.d} $muted={c.muted}>
              <svg width="68" height="68" fill="none" stroke="currentColor" strokeWidth="3.2"><path d={c.d} /></svg>
            </Control>
          ))}
        </Controls>
        <Overlay width="1196" height="411" viewBox="12 801 1196 411">
          <path d="M626 1178l-16 9 16 9M632 1187h13" fill="none" stroke={INK} strokeWidth="3" />
          <AxisLabel x={648} y={1201} w={88} size={40} fill={INK}>12.74</AxisLabel>
          {strokes.map((s, i) => (
            <path key={i} d={smooth(s)} fill="none" stroke="#ff7b45" strokeWidth="22" strokeLinecap="round" strokeLinejoin="round" />
          ))}
        </Overlay>
      </ChartArea>

      <Indicator
        name="MACD"
        width={150}
        readings={[
          { text: 'DIF:-4.23', color: INK, ls: 1 },
          { text: 'DEA:-2.88', color: GOLD, ls: 1.3 },
          { text: 'M:-2.70', color: '#b935c4', ls: 0.4, up: true }
        ]}
      >
        <SideTab>
          <svg width="16" height="28" viewBox="0 0 16 28" fill="none" stroke="#fff" strokeWidth="4">
            <path d="M14 2L3 14l11 12" />
          </svg>
        </SideTab>
      </Indicator>
      <ChartArea>
        <svg width="1196" height="155" viewBox="12 1274 1196 155">
          <Frame top={1274} height={155} />
          <path d={line(dif)} fill="none" stroke={INK} strokeWidth="3.2" strokeLinejoin="round" />
          <path d={bars(macd, 1368, true, 1.95)} fill={RED} opacity="0.97" />
          <path d={bars(macd, 1368, false, 1.95)} fill={GREEN} />
          <path d={line(dif)} fill="none" stroke={INK} strokeWidth="2.6" opacity="0.5" />
          <path d={line(dea)} fill="none" stroke={GOLD} strokeWidth="3.2" strokeLinejoin="round" />
          <AxisLabel y={1319} w={66}>6.74</AxisLabel>
          <AxisLabel y={1424} w={85}>-4.23</AxisLabel>
        </svg>
      </ChartArea>

      <Indicator
        name="SKDJ"
        width={131}
        ls={-2}
        readings={[
          { text: 'K:16.05', color: INK, ls: -0.3, up: true },
          { text: 'D:14.13', color: GOLD, ls: -1.5 }
        ]}
      />
      <ChartArea>
        <svg width="1196" height="155" viewBox="12 1491 1196 155">
          <Frame top={1491} height={155} />
          <path d="M12 1511H1207M12 1564H1207M12 1617H1207" stroke="#ddd" strokeWidth="2" strokeDasharray="12 7" />
          <path d={line(kLine)} fill="none" stroke={INK} strokeWidth="4.2" strokeLinejoin="round" />
          <path d={line(dLine)} fill="none" stroke={GOLD} strokeWidth="3.8" strokeLinejoin="round" />
          <AxisLabel y={1536} w={94}>90.86</AxisLabel>
          <AxisLabel y={1641} w={61}>4.15</AxisLabel>
          <AxisLabel x={1168} y={1532} w={38} size={31} fill="#c8c8c8">80</AxisLabel>
          <AxisLabel x={1168} y={1563} w={38} size={31} fill="#c8c8c8">50</AxisLabel>
          <AxisLabel x={1168} y={1617} w={38} size={31} fill="#c8c8c8">20</AxisLabel>
        </svg>
      </ChartArea>

      <Indicator
        name="LON"
        width={116}
        readings={[
          { text: 'LON:-1834.77', color: INK, ls: 0.5, up: true },
          { text: 'LONMA:-1359.50', color: GOLD, ls: 0.7 }
        ]}
      />
      <ChartArea>
        <svg width="1196" height="155" viewBox="12 1708 1196 155">
          <Frame top={1708} height={155} />
          <path d="M12 1796.5H1207" stroke="#f3c9c9" strokeWidth="2" strokeDasharray="12 7" />
          <path d={line(lon)} fill="none" stroke={INK} strokeWidth="4.4" />
          <path d={bars(lon, 1796, true, 1.95)} fill={RED} />
          <path d={bars(lon, 1796, false, 1.95)} fill={GREEN} />
          <path d={line(lonma)} fill="none" stroke={GOLD} strokeWidth="2.4" strokeLinejoin="round" />
          <AxisLabel y={1753} w={132}>2486.36</AxisLabel>
          <AxisLabel y={1858} w={143}>-1836.96</AxisLabel>
          <AxisLabel x={1188} y={1795} w={18} size={31} fill="#c8c8c8">0</AxisLabel>
        </svg>
      </ChartArea>

      <Indicator name="DK提示" width={166} ls={-1.2} />
      <HintBox>
        <HintDate>2025/12/19明日操作提示</HintDate>
        <HintText>如果明日收盘价格&gt;42.39，将出现D点</HintText>
      </HintBox>
      <DateAxis>
        <AxisDate $align="left">20230706</AxisDate>
        <AxisDate>20240429</AxisDate>
        <AxisDate $ls={-1}>20250227</AxisDate>
        <AxisDate $align="right" $ls={-2}>20251219</AxisDate>
        <Tick $left={394} />
        <Tick $left={793} />
        <Tick $left={1193} />
      </DateAxis>

      <Assistant>
        <AskBox>
          <AskLogo>问Ai</AskLogo>
          <Question>特朗普“核”计划曝光！并购<Latin>TAE</Latin>剑指人造太阳...</Question>
          <Go>
            <svg width="44" height="38" viewBox="0 0 44 38" fill="none" stroke="#fff" strokeWidth="5" strokeLinecap="round" strokeLinejoin="round">
              <path d="M3 19h37M24 3l16 16-16 16" />
            </svg>
          </Go>
        </AskBox>
      </Assistant>

      <NoticeClip>
        <Notice>
          <svg width="47" height="40" viewBox="0 0 47 40" fill="#e8550a">
            <path d="M0 13h3v14H0zM5 13h5v14H5zM9 12h8L41 2V0h5v40h-5v-3l-6-2v3l-8-3v-3L17 28H9z" />
          </svg>
          <NoticeText>集碎片，轻松兑好礼，先到先得！</NoticeText>
          <svg width="50" height="36" viewBox="0 0 50 36" fill="none" stroke="#c9581a">
            <path d="M1 0v36" />
            <path d="M18 2l32 32M50 2L18 34" strokeWidth="3" />
          </svg>
        </Notice>
      </NoticeClip>

      <BottomBar>
        <IndexBlock>
          <Triangle $w={22} $h={8} $color="#777" $up />
          <IndexValue $size={41} $color="#c92f35" $ls={-0.8}>3899.31</IndexValue>
          <IndexRow>
            <Txt $size={35} $color="#555">上证</Txt>
            <Txt $size={39} $color="#c92f35">0.59%</Txt>
          </IndexRow>
        </IndexBlock>
        <Action>
          <svg width="64" height="60" viewBox="0 0 64 60" fill="none" stroke="#666" strokeWidth="3">
            <path d="M16 9a27 27 0 0 1 43 37l1-8M59 46l5-4M48 53A27 27 0 0 1 7 17l-6 5M7 17v9" />
            <path d="M24 18l9 12 9-12M22 30h21M22 38h21M32.500 30v17" />
          </svg>
          交易
        </Action>
        <Action>
          <svg width="54" height="60" viewBox="0 0 54 60" fill="none" stroke="#666" strokeWidth="3">
            <path d="M40 4H10a8 8 0 0 0-8 8v37a8 8 0 0 0 8 8h34a8 8 0 0 0 8-8V21" />
            <path d="M20 37l3-8 21-20 4 4-22 21zM46 7l3-3 4 4-3 3z" fill="#666" strokeWidth="1" />
          </svg>
          发帖
        </Action>
        <Action>
          <svg width="54" height="60" viewBox="0 0 54 60" fill="none" stroke="#666" strokeWidth="3">
            <rect x="2" y="5" width="22" height="23" rx="5" />
            <rect x="2" y="33" width="22" height="23" rx="5" />
            <rect x="30" y="33" width="22" height="23" rx="5" />
            <rect x="31" y="7.5" width="19" height="19" rx="3" transform="rotate(45 40.5 17)" />
          </svg>
          功能
        </Action>
        <Action $accent>
          <svg width="60" height="60" viewBox="0 0 60 60" fill="none" stroke="#c9581a" strokeWidth="3">
            <circle cx="30" cy="30" r="26.500" />
            <path d="M17 30h26M30 17v26" />
          </svg>
          加自选
        </Action>
      </BottomBar>

      <NavBar>
        <svg width="42" height="44" viewBox="0 0 42 44" stroke="#7a7a7a" strokeWidth="5.5" strokeLinecap="round">
          <path d="M3 5h36M3 22h36M3 38.500h36" />
        </svg>
        <svg width="44" height="44" viewBox="0 0 44 44" fill="none" stroke="#7a7a7a" strokeWidth="5">
          <rect x="2.5" y="2.5" width="39" height="39" rx="9" />
        </svg>
        <svg width="28" height="44" viewBox="0 0 28 44" fill="none" stroke="#7a7a7a" strokeWidth="5" strokeLinejoin="round">
          <path d="M26 1L5 19q-3 3 0 6l21 18" />
        </svg>
      </NavBar>
    </App>
  </Screen>
)
